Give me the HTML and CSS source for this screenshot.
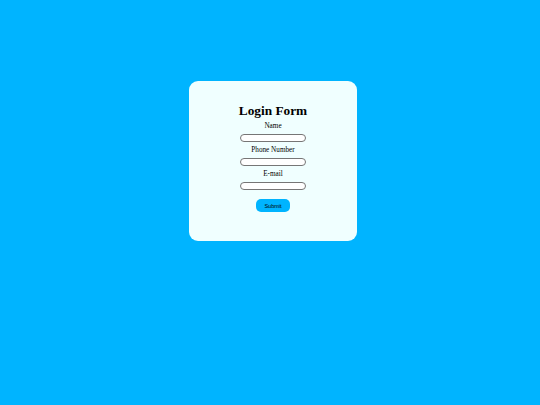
FILE: index.html
```html
<!DOCTYPE html>
<html>
<head>
<meta charset="utf-8">
<link rel="stylesheet" href="styles.css">
</head>
<body>
<div class="card">
  <h1 class="title">Login Form</h1>
  <label class="label">Name</label>
  <input class="field" type="text">
  <label class="label">Phone Number</label>
  <input class="field" type="text">
  <label class="label">E-mail</label>
  <input class="field" type="text">
  <button class="submit">Submit</button>
</div>
</body>
</html>
```
FILE: styles.css
```css
html, body {
  margin: 0;
  padding: 0;
}
body {
  background: #00b4ff;
  width: 540px;
  height: 405px;
  padding-top: 81px;
  box-sizing: border-box;
  font-family: "Liberation Serif", serif;
}
.card {
  margin-left: 189px;
  width: 168px;
  height: 160px;
  box-sizing: border-box;
  background: #f0ffff;
  border-radius: 9px;
  padding-top: 22px;
  display: flex;
  flex-direction: column;
  align-items: center;
}
.title {
  margin: 0;
  font-size: 13.3px;
  line-height: 15px;
  font-weight: bold;
  color: #000;
}
.label {
  margin-top: 3px;
  font-size: 7.2px;
  line-height: 11px;
  color: #000;
}
.field {
  margin: 2px 0 0;
  width: 66px;
  height: 8px;
  box-sizing: border-box;
  padding: 0;
  border: 1px solid #767676;
  border-radius: 4px;
  background: #fff;
}
.submit {
  margin-top: 9px;
  width: 34px;
  height: 13px;
  padding: 0;
  border: none;
  border-radius: 5px;
  background: #00b4ff;
  font-family: "Liberation Sans", sans-serif;
  font-size: 5.5px;
  color: #000;
}
```
